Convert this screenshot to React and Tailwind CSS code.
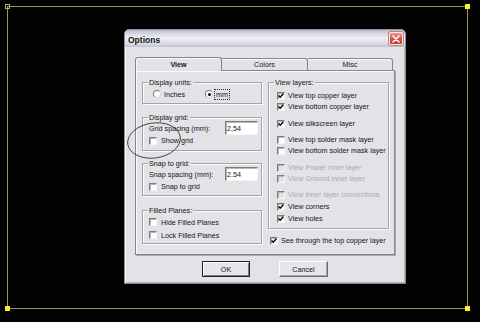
import React from "react";

const T = "text-[7.2px] leading-[9px] text-[#141414] whitespace-nowrap";

function Check({ checked, disabled }) {
  return (
    <span
      className={`relative inline-block w-[8px] h-[8px] shrink-0 border border-t-[#7c7c7c] border-l-[#7c7c7c] border-b-[#f4f4f4] border-r-[#f4f4f4] ${
        disabled ? "bg-[#e4e4e4]" : "bg-white"
      } shadow-[inset_1px_1px_0_#b4b4b4]`}
    >
      {checked && (
        <svg className="absolute left-0 top-0" width="6" height="6" viewBox="0 0 6 6">
          <path d="M0.6 2.6 L2.2 4.3 L5.4 0.8" stroke="#000" strokeWidth="1.4" fill="none" />
        </svg>
      )}
    </span>
  );
}

function Radio({ on }) {
  return (
    <span className="relative inline-flex items-center justify-center w-[8px] h-[8px] shrink-0 rounded-full bg-white border border-t-[#7a7a7a] border-l-[#7a7a7a] border-b-[#d8d8d8] border-r-[#d8d8d8]">
      {on && <span className="w-[3px] h-[3px] rounded-full bg-black" />}
    </span>
  );
}

function CheckRow({ label, checked, disabled, gap = "gap-[3px]", extra = "" }) {
  return (
    <div className={`flex items-center h-[11px] ${gap} ${extra}`}>
      <Check checked={checked} disabled={disabled} />
      <span className={`${T} ${disabled ? "!text-[#a9a9ad]" : ""}`}>{label}</span>
    </div>
  );
}

function Group({ label, className = "", children }) {
  return (
    <div
      className={`relative border border-[#a4a4a8] shadow-[inset_1px_1px_0_#fbfbfb,1px_1px_0_#fbfbfb] ${className}`}
    >
      <span className={`absolute left-[5px] -top-[5px] px-[1px] bg-[#e3e3e7] ${T}`}>{label}</span>
      {children}
    </div>
  );
}

function Input({ value }) {
  return (
    <div className="w-[33px] h-[14px] bg-white border border-t-[#7c7c7c] border-l-[#7c7c7c] border-b-[#f4f4f4] border-r-[#f4f4f4] flex items-center pl-[1px] shadow-[inset_1px_1px_0_#b8b8b8]">
      <span className={T}>{value}</span>
    </div>
  );
}

export default function App() {
  return (
    <div className="relative w-[480px] h-[322px] bg-[#020202] overflow-hidden font-['Liberation_Sans',Arial,sans-serif]">
      {/* yellow canvas frame */}
      <div className="absolute left-[7px] top-[6px] w-[461px] h-[303px] border border-[#9a9a4c]" />
      <div className="absolute left-[5px] top-[4px] w-[5px] h-[5px] border border-[#b8b84c]" />
      <div className="absolute left-[465px] top-[4px] w-[5px] h-[5px] bg-[#f4f428]" />
      <div className="absolute left-[5px] top-[306px] w-[5px] h-[5px] bg-[#f4f428]" />
      <div className="absolute left-[465px] top-[306px] w-[5px] h-[5px] bg-[#f4f428]" />

      {/* dialog */}
      <div className="absolute left-[124px] top-[29px] w-[282px] h-[255px] rounded-t-[5px] border border-[#8c8c9a] bg-[#e3e3e7] flex flex-col shadow-[inset_1px_0_0_#f4f4f8,inset_-1px_-1px_0_#b4b4bc]">
        {/* title bar */}
        <div className="h-[17px] shrink-0 flex items-center justify-between pl-[3px] pr-[2px] rounded-t-[4px] bg-[linear-gradient(to_bottom,#b9b9cd_0%,#dcdce8_25%,#efeff5_50%,#dadae6_80%,#c2c2d4_100%)]">
          <span className="text-[8.5px] leading-[10px] font-bold text-[#141420] pt-[2px]">Options</span>
          <div className="w-[14px] h-[13px] rounded-[2px] border border-[#f0f0f4] bg-[linear-gradient(to_bottom,#ec9a8c,#d9503e_55%,#c63a28)] flex items-center justify-center shadow-[0_0_0_1px_#c0807a]">
            <svg width="8" height="8" viewBox="0 0 8 8">
              <path d="M1 1 L7 7 M7 1 L1 7" stroke="#fff" strokeWidth="1.6" strokeLinecap="round" />
            </svg>
          </div>
        </div>

        {/* body */}
        <div className="flex flex-col pl-[10px] pt-[10px]">
          {/* tabs */}
          <div className="flex items-end h-[13px] w-[258px]">
            <div className="relative z-10 -mb-[1px] w-[87px] h-[14px] bg-[#e3e3e7] border border-b-0 border-[#85858b] rounded-t-[3px] flex items-center justify-center shadow-[inset_1px_1px_0_#fafafa]">
              <span className={`${T} font-bold`}>View</span>
            </div>
            <div className="w-[86px] h-[12px] bg-[#e3e3e7] border border-b-0 border-l-0 border-[#85858b] rounded-tr-[3px] flex items-center justify-center shadow-[inset_0_1px_0_#fafafa]">
              <span className={T}>Colors</span>
            </div>
            <div className="w-[85px] h-[12px] bg-[#e3e3e7] border border-b-0 border-l-0 border-[#85858b] rounded-tr-[3px] flex items-center justify-center shadow-[inset_0_1px_0_#fafafa]">
              <span className={T}>Misc</span>
            </div>
          </div>

          {/* panel */}
          <div className="w-[260px] h-[185px] border border-[#85858b] bg-[#e3e3e7] shadow-[inset_1px_1px_0_#fafafa,1px_1px_0_#a8a8ae] flex pl-[6px] pt-[11px]">
            {/* left column */}
            <div className="flex flex-col w-[120px]">
              <Group label="Display units:" className="h-[22px]">
                <div className="flex items-center h-full pl-[10px] pt-[2px]">
                  <div className="flex items-center gap-[3px] w-[52px]">
                    <Radio />
                    <span className={T}>Inches</span>
                  </div>
                  <div className="flex items-center gap-[1px]">
                    <Radio on />
                    <span className={`${T} border border-dotted border-[#303030] px-[1px]`}>mm</span>
                  </div>
                </div>
              </Group>

              <Group label="Display grid:" className="h-[34px] mt-[13px]">
                <div className="flex flex-col pt-[3px]">
                  <div className="flex items-center justify-between h-[14px] pl-[6px] pr-[3px]">
                    <span className={T}>Grid spacing (mm):</span>
                    <Input value="2,54" />
                  </div>
                  <CheckRow label="Show grid" extra="pl-[6px]" gap="gap-[4px]" />
                </div>
              </Group>

              <Group label="Snap to grid:" className="h-[33px] mt-[12px]">
                <div className="flex flex-col pt-[3px]">
                  <div className="flex items-center justify-between h-[14px] pl-[6px] pr-[3px]">
                    <span className={T}>Snap spacing (mm):</span>
                    <Input value="2.54" />
                  </div>
                  <CheckRow label="Snap to grid" extra="pl-[6px]" gap="gap-[4px]" />
                </div>
              </Group>

              <Group label="Filled Planes:" className="h-[34px] mt-[14px]">
                <div className="flex flex-col pt-[5px] pl-[6px] gap-[1px]">
                  <CheckRow label="Hide Filled Planes" gap="gap-[4px]" extra="!h-[12px]" />
                  <CheckRow label="Lock Filled Planes" gap="gap-[4px]" extra="!h-[12px]" />
                </div>
              </Group>
            </div>

            {/* right column */}
            <div className="flex flex-col w-[121px] ml-[6px]">
              <Group label="View layers:" className="h-[147px]">
                <div className="flex flex-col pt-[7px] pl-[8px]">
                  <CheckRow label="View top copper layer" checked />
                  <CheckRow label="View bottom copper layer" checked />
                  <CheckRow label="View silkscreen layer" checked extra="mt-[6px]" />
                  <CheckRow label="View top solder mask layer" extra="mt-[5px]" />
                  <CheckRow label="View bottom solder mask layer" />
                  <CheckRow label="View Power inner layer" disabled extra="mt-[6px]" />
                  <CheckRow label="View Ground inner layer" disabled />
                  <CheckRow label="View inner layer connections" disabled extra="mt-[5px]" />
                  <CheckRow label="View corners" checked extra="mt-[1px]" />
                  <CheckRow label="View holes" checked extra="mt-[1px]" />
                </div>
              </Group>
              <CheckRow label="See through the top copper layer" checked extra="mt-[6px] pl-[2px]" />
            </div>
          </div>

          {/* buttons */}
          <div className="w-[260px] flex justify-center gap-[29px] mt-[6px]">
            <button className="w-[48px] h-[16px] bg-[#e6e6ea] border border-[#202024] shadow-[inset_1px_1px_0_#fdfdfd,inset_-1px_-1px_0_#7c7c80] flex items-center justify-center">
              <span className={T}>OK</span>
            </button>
            <button className="w-[49px] h-[16px] bg-[#e6e6ea] border border-t-[#fdfdfd] border-l-[#fdfdfd] border-b-[#6c6c70] border-r-[#6c6c70] shadow-[inset_-1px_-1px_0_#a8a8ac] flex items-center justify-center">
              <span className={T}>Cancel</span>
            </button>
          </div>
        </div>
      </div>

      {/* hand-drawn ellipse annotation */}
      <svg className="absolute left-0 top-0 pointer-events-none" width="480" height="322" viewBox="0 0 480 322">
        <ellipse cx="154" cy="140.5" rx="26.5" ry="17.5" transform="rotate(-8 154 140.5)" fill="none" stroke="#3a3a3e" strokeWidth="0.9" />
      </svg>
    </div>
  );
}
